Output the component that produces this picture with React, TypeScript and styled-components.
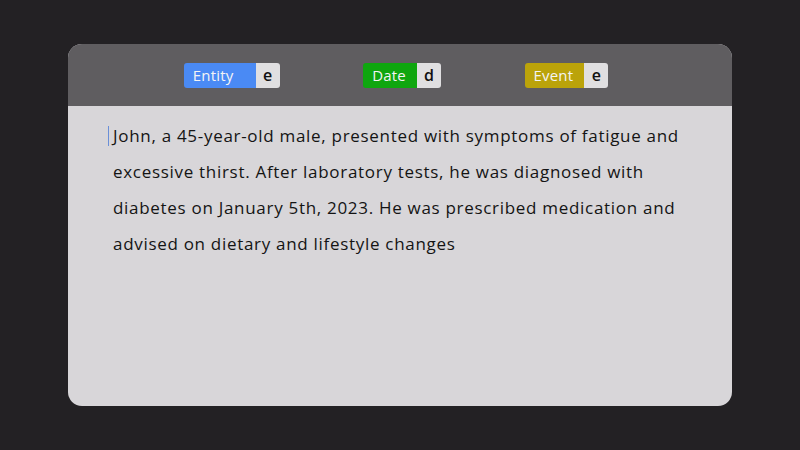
import styled, { createGlobalStyle } from "styled-components";

const GlobalStyle = createGlobalStyle`
    html, body {
        margin: 0;
        padding: 0;
        background: #232124;
    }
    #root {
        height: 100vh;
    }
`;

interface TagProps {
    label: string;
    shortcut: string;
    color: string;
    minWidth?: number;
}

const TAGS: TagProps[] = [
    { label: 'Entity', shortcut: 'e', color: '#4a8af4', minWidth: 72 },
    { label: 'Date', shortcut: 'd', color: '#0fa60f' },
    { label: 'Event', shortcut: 'e', color: '#bba30a' },
];

function Tag({ label, shortcut, color, minWidth }: TagProps) {
    return (
        <TagWrap>
            <TagLabel $color={color} $minWidth={minWidth}>{label}</TagLabel>
            <TagKey>{shortcut}</TagKey>
        </TagWrap>
    );
}

export default function App() {
    return (
        <Page>
            <GlobalStyle />
            <Card>
                <Toolbar>
                    {TAGS.map((tag) => (
                        <Tag key={tag.label} {...tag} />
                    ))}
                </Toolbar>
                <Editor>
                    <Caret />
                    John, a 45-year-old male, presented with symptoms of fatigue and
                    excessive thirst. After laboratory tests, he was diagnosed with
                    diabetes on January 5th, 2023. He was prescribed medication and
                    advised on dietary and lifestyle changes
                </Editor>
            </Card>
        </Page>
    );
}

const Page = styled.div`
    height: 100%;
    display: flex;
    align-items: center;
    justify-content: center;
    font-family: "Open Sans", "Liberation Sans", sans-serif;
`;

const Card = styled.div`
    width: 664px;
    height: 362px;
    border-radius: 14px;
    overflow: hidden;
    background: #d8d6d9;
    display: flex;
    flex-direction: column;
`;

const Toolbar = styled.div`
    height: 62px;
    flex-shrink: 0;
    background: #5f5d60;
    display: flex;
    align-items: center;
    justify-content: center;
    gap: 83.5px;
    padding-right: 8px;
`;

const TagWrap = styled.div`
    display: flex;
    height: 25px;
    border-radius: 3px;
    overflow: hidden;
`;

const TagLabel = styled.span<{ $color: string; $minWidth?: number }>`
    display: flex;
    align-items: center;
    box-sizing: border-box;
    min-width: ${(p) => (p.$minWidth ? `${p.$minWidth}px` : 'auto')};
    padding: 0 11px 0 9px;
    background: ${(p) => p.$color};
    color: #f4f4f4;
    font-size: 15px;
    letter-spacing: 0.2px;
`;

const TagKey = styled.span`
    display: flex;
    align-items: center;
    justify-content: center;
    width: 24px;
    background: #e0dfe1;
    color: #111;
    font-size: 16px;
    font-weight: 600;
`;

const Editor = styled.div`
    padding: 12px 40px 0 45px;
    color: #141414;
    font-size: 17px;
    line-height: 36px;
    letter-spacing: 0.7px;
`;

const Caret = styled.span`
    display: inline-block;
    width: 1px;
    height: 20px;
    margin-left: -5px;
    margin-right: 4px;
    vertical-align: -4px;
    background: #6a8fd8;
`;
